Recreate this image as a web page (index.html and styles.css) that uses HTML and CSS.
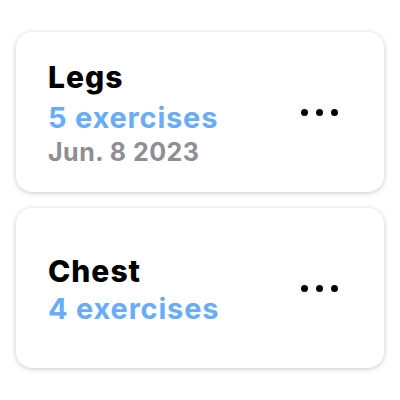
FILE: index.html
```html
<!DOCTYPE html>
<html>
<head>
<meta charset="utf-8">
<link rel="stylesheet" href="styles.css">
</head>
<body>
<div class="list">
  <div class="card">
    <div class="info dated">
      <div class="title">Legs</div>
      <div class="count">5 exercises</div>
      <div class="date">Jun. 8 2023</div>
    </div>
    <div class="more"><span class="dot"></span><span class="dot"></span><span class="dot"></span></div>
  </div>
  <div class="card">
    <div class="info">
      <div class="title">Chest</div>
      <div class="count">4 exercises</div>
    </div>
    <div class="more"><span class="dot"></span><span class="dot"></span><span class="dot"></span></div>
  </div>
</div>
</body>
</html>
```
FILE: styles.css
```css
html, body {
  margin: 0;
  padding: 0;
  background: #ffffff;
}
body {
  font-family: Inter, "Noto Sans", sans-serif;
}
.list {
  display: flex;
  flex-direction: column;
  gap: 16px;
  padding: 32px 16px;
}
.card {
  height: 160px;
  box-sizing: border-box;
  border-radius: 16px;
  background: #fff;
  box-shadow: 0 1px 5px rgba(0, 0, 0, 0.22);
  display: flex;
  align-items: center;
  justify-content: space-between;
  padding: 3px 46px 0 32px;
}
.info {
  display: flex;
  flex-direction: column;
}
.title {
  font-size: 30px;
  font-weight: 800;
  color: #000;
  line-height: 38px;
  letter-spacing: 1px;
}
.dated .title {
  margin-bottom: 3px;
}
.count {
  font-size: 29px;
  font-weight: 700;
  color: #67adfc;
  line-height: 38px;
  letter-spacing: 0.8px;
}
.date {
  font-size: 25px;
  font-weight: 700;
  color: #8e8e93;
  line-height: 34px;
  letter-spacing: 0.5px;
  margin-top: -2px;
}
.more {
  display: flex;
  gap: 8px;
  margin-top: -3px;
}
.dot {
  width: 7px;
  height: 7px;
  border-radius: 50%;
  background: #000;
}
```
